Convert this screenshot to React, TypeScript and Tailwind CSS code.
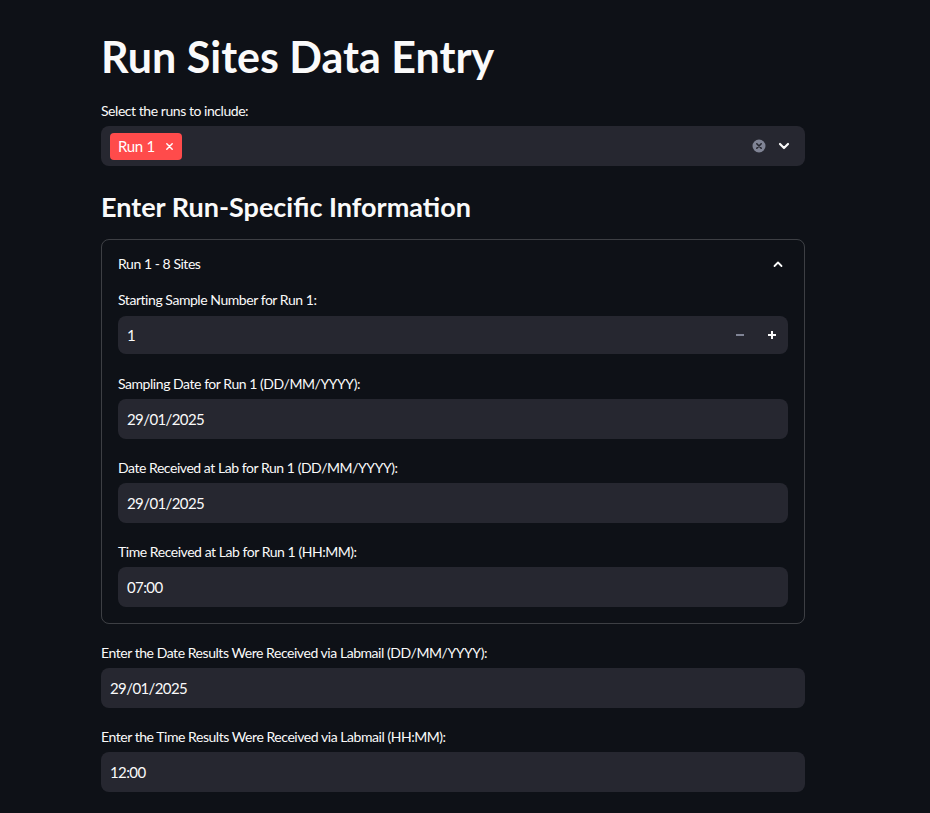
import React from "react";

const font = { fontFamily: "Lato, 'Noto Sans', sans-serif" };

function Label({ children }: { children: React.ReactNode }) {
  return (
    <div className="h-[24px] mb-[4px] flex items-center text-[14px] text-[#fafafa] tracking-[-0.45px]">
      {children}
    </div>
  );
}

function TextInput({ value }: { value: string }) {
  return (
    <div className="h-[40px] rounded-[8px] bg-[#262730] flex items-center pl-[9px] text-[15px] tracking-[-0.6px] text-[#fafafa]">
      {value}
    </div>
  );
}

function Field({ label, value, className = "" }: { label: string; value: string; className?: string }) {
  return (
    <div className={className}>
      <Label>{label}</Label>
      <TextInput value={value} />
    </div>
  );
}

export default function App() {
  return (
    <div className="min-h-[813px] bg-[#0e1117] text-[#fafafa]" style={font}>
      <div className="w-[704px] ml-[101px] pt-[30px]">
        <h1 className="h-[52px] flex items-center text-[43px] font-bold leading-none tracking-[0px]">
          Run Sites Data Entry
        </h1>
        <div className="mt-[16px]">
          <Label>Select the runs to include:</Label>
          <div className="h-[40px] rounded-[8px] bg-[#262730] flex items-center pl-[9px] pr-[15px]">
            <div className="h-[27px] rounded-[4px] bg-[#ff4b4b] flex items-center pl-[8px] pr-[8px] text-[15px] tracking-[-0.3px] text-white">
              <span>Run 1</span>
              <svg className="ml-[10px]" width="9" height="9" viewBox="0 0 10 10">
                <path d="M2 2 L8 8 M8 2 L2 8" stroke="white" strokeWidth="1.6" strokeLinecap="round" />
              </svg>
            </div>
            <div className="flex-1" />
            <svg width="14" height="14" viewBox="0 0 14 14">
              <circle cx="7" cy="7" r="6.5" fill="#808495" />
              <path d="M4.8 4.8 L9.2 9.2 M9.2 4.8 L4.8 9.2" stroke="#262730" strokeWidth="1.6" strokeLinecap="round" />
            </svg>
            <svg className="ml-[12px]" width="12" height="12" viewBox="0 0 12 12">
              <path d="M2 4 L6 8 L10 4" stroke="#fafafa" strokeWidth="2.2" fill="none" strokeLinecap="round" strokeLinejoin="round" />
            </svg>
          </div>
        </div>
        <h2 className="mt-[20px] h-[40px] flex items-center text-[27px] font-bold leading-none tracking-[0px]">
          Enter Run-Specific Information
        </h2>
        <div className="mt-[13px] rounded-[8px] border border-[rgba(250,250,250,0.2)]">
          <div className="h-[47px] flex items-center px-[16px] text-[14px] tracking-[-0.45px]">
            <span className="flex-1">Run 1 - 8 Sites</span>
            <svg width="12" height="12" viewBox="0 0 12 12" className="mr-[4px]">
              <path d="M2.5 8 L6 4.5 L9.5 8" stroke="#fafafa" strokeWidth="1.8" fill="none" strokeLinecap="round" strokeLinejoin="round" />
            </svg>
          </div>
          <div className="px-[16px] pb-[16px]">
            <div className="h-[25px] mb-[4px] flex items-center text-[14px] tracking-[-0.45px]">
              Starting Sample Number for Run 1:
            </div>
            <div className="h-[38px] rounded-[8px] bg-[#262730] flex items-center pl-[9px] text-[15px]">
              <span className="flex-1">1</span>
              <div className="w-[32px] h-full flex items-center justify-center">
                <svg width="10" height="10" viewBox="0 0 10 10">
                  <path d="M1 5 L9 5" stroke="#808495" strokeWidth="2" />
                </svg>
              </div>
              <div className="w-[32px] h-full flex items-center justify-center">
                <svg width="10" height="10" viewBox="0 0 10 10">
                  <path d="M1 5 L9 5 M5 1 L5 9" stroke="#fafafa" strokeWidth="2" />
                </svg>
              </div>
            </div>
            <Field className="mt-[17px]" label="Sampling Date for Run 1 (DD/MM/YYYY):" value="29/01/2025" />
            <Field className="mt-[16px]" label="Date Received at Lab for Run 1 (DD/MM/YYYY):" value="29/01/2025" />
            <Field className="mt-[16px]" label="Time Received at Lab for Run 1 (HH:MM):" value="07:00" />
          </div>
        </div>
        <Field className="mt-[16px]" label="Enter the Date Results Were Received via Labmail (DD/MM/YYYY):" value="29/01/2025" />
        <Field className="mt-[16px]" label="Enter the Time Results Were Received via Labmail (HH:MM):" value="12:00" />
      </div>
    </div>
  );
}
